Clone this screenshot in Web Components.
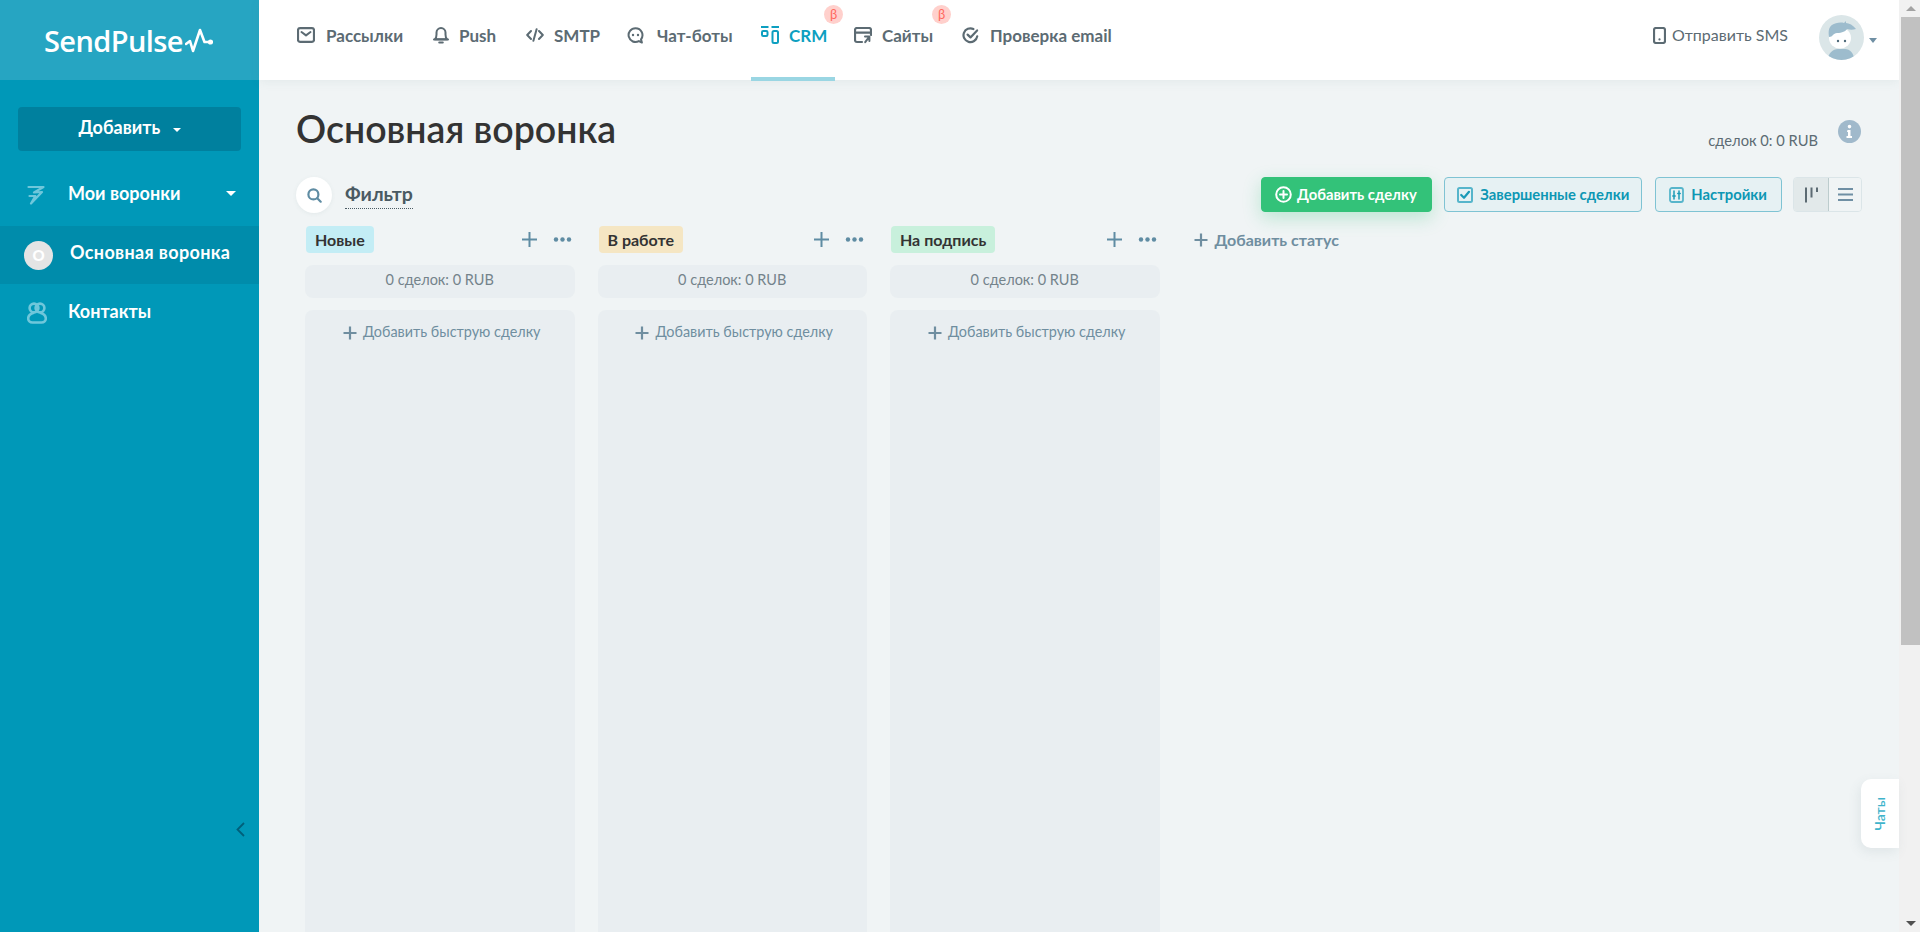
<!DOCTYPE html>
<html lang="ru"><head><meta charset="utf-8"><title>SendPulse CRM</title>
<style>
html,body{margin:0;height:932px;overflow:hidden;background:#f0f4f5;font-family:"Lato","Open Sans","Noto Sans",sans-serif;color:#333}
</style></head><body>
<sp-app>
  <sp-sidebar slot="side"></sp-sidebar>
  <sp-topnav slot="top"></sp-topnav>
  <sp-board slot="main"></sp-board>
  <sp-scrollbar slot="bar"></sp-scrollbar>
  <sp-chat-tab slot="float">Чаты</sp-chat-tab>
</sp-app>
<script>
const FONT='"Lato","Open Sans","Noto Sans",sans-serif';
const svg=(w,h,vb,body,extra='')=>`<svg xmlns="http://www.w3.org/2000/svg" width="${w}" height="${h}" viewBox="${vb}" fill="none" stroke-linecap="round" stroke-linejoin="round" ${extra}>${body}</svg>`;
const ICONS={
 mail:svg(18,16,'0 0 18 16','<rect x="1" y="1.2" width="16" height="13.6" rx="2" stroke="currentColor" stroke-width="2.200"/><path d="M4.500 5l4.500 3.400L13.500 5" stroke="currentColor" stroke-width="2"/>'),
 bell:svg(16,18,'0 0 16 18','<path d="M2 13.200c1.200-1.200 1.500-2.400 1.500-4.600V6.600a4.500 4.500 0 0 1 9 0v2c0 2.200.3 3.400 1.500 4.600z" stroke="currentColor" stroke-width="2"/><path d="M1 13.400h14M6.200 16.600h3.600" stroke="currentColor" stroke-width="2"/>'),
 code:svg(18,14,'0 0 18 14','<path d="M5 3L1.200 7 5 11M13 3l3.800 4L13 11M10.600 1.200L7.400 12.800" stroke="currentColor" stroke-width="2"/>'),
 chat:svg(17,17,'0 0 17 17','<path d="M8.500 1.200a6.900 6.900 0 1 0 3.400 12.900l3 1.400-.9-3.200A6.900 6.900 0 0 0 8.500 1.200z" stroke="currentColor" stroke-width="2"/><circle cx="6" cy="8" r="1.200" fill="currentColor"/><circle cx="11" cy="8" r="1.200" fill="currentColor"/>'),
 crm:svg(18,18,'0 0 18 18','<path d="M0 1h7.500M10.500 1H18" stroke="currentColor" stroke-width="2" stroke-linecap="butt"/><rect x="1" y="5" width="5.500" height="5" rx="1.200" stroke="currentColor" stroke-width="2"/><rect x="11.500" y="5" width="5.500" height="12" rx="1.500" stroke="currentColor" stroke-width="2"/>'),
 site:svg(18,17,'0 0 18 17','<path d="M8 15H3a2 2 0 0 1-2-2V3a2 2 0 0 1 2-2h12a2 2 0 0 1 2 2v5" stroke="currentColor" stroke-width="2.200"/><path d="M1 5.600h16" stroke="currentColor" stroke-width="2.200"/><path d="M11 9.500h4.400v4.400M15.200 9.800l-4 5.400" stroke="currentColor" stroke-width="2"/>'),
 check:svg(18,17,'0 0 18 17','<path d="M15.200 9.400A6.900 6.900 0 1 1 11.400 2" stroke="currentColor" stroke-width="2.200"/><path d="M5.600 7.600l2.900 2.800 6.600-7" stroke="currentColor" stroke-width="2.200"/>'),
 phone:svg(13,17,'0 0 13 17','<rect x="1" y="1" width="11" height="15" rx="2" stroke="currentColor" stroke-width="2.200"/><circle cx="6.500" cy="12.400" r="1.100" fill="currentColor"/>'),
 funnel:svg(18,20,'0 0 18 20','<path d="M1.500 2h15L7 7.500l8-.5L4 18.500l4.300-7.500H2.500" stroke="currentColor" stroke-width="2.200"/>'),
 people:svg(20,22,'0 0 20 22','<circle cx="7" cy="6" r="4.400" stroke="currentColor" stroke-width="2.600"/><circle cx="13" cy="6" r="4.400" stroke="currentColor" stroke-width="2.600"/><path d="M6 11c-3 1-4.800 3-4.800 5.500 0 2.200 1.700 4 4.300 4h9c2.600 0 4.300-1.800 4.300-4 0-2.500-1.800-4.500-4.800-5.500" stroke="currentColor" stroke-width="2.600"/>'),
 search:svg(15,15,'0 0 15 15','<circle cx="6.400" cy="6.400" r="5" stroke="currentColor" stroke-width="2.200"/><path d="M10.300 10.300l3.400 3.400" stroke="currentColor" stroke-width="2.200"/>'),
 plus:svg(17,17,'0 0 17 17','<path d="M8.500 1v15M1 8.500h15" stroke="currentColor" stroke-width="2" stroke-linecap="butt"/>'),
 plusSm:svg(14,14,'0 0 14 14','<path d="M7 .5v13M.5 7h13" stroke="currentColor" stroke-width="2.200" stroke-linecap="butt"/>'),
 dots:svg(19,5,'0 0 19 5','<circle cx="3" cy="2.500" r="2.200" fill="currentColor"/><circle cx="9.500" cy="2.500" r="2.200" fill="currentColor"/><circle cx="16" cy="2.500" r="2.200" fill="currentColor"/>'),
 pluscircle:svg(17,17,'0 0 17 17','<circle cx="8.500" cy="8.500" r="7.300" stroke="currentColor" stroke-width="2"/><path d="M8.500 5v7M5 8.500h7" stroke="currentColor" stroke-width="2"/>'),
 checkbox:svg(16,16,'0 0 16 16','<rect x="1" y="1" width="14" height="14" rx="1.500" stroke="#56b5cb" stroke-width="2"/><path d="M4.200 8l2.800 2.800 5-6" stroke="#1b9ab7" stroke-width="2.200"/>'),
 sliders:svg(15,16,'0 0 15 16','<rect x="1" y="1" width="13" height="14" rx="2" stroke="#56b5cb" stroke-width="1.800"/><path d="M5 4v8M10 4v8" stroke="#1b9ab7" stroke-width="1.500"/><path d="M3.800 9h2.400M8.800 6.500h2.400" stroke="#1b9ab7" stroke-width="1.500"/>'),
 kanban:svg(15,17,'0 0 15 17','<path d="M2 1.500v15" stroke="#5c6b73" stroke-width="2" stroke-linecap="butt"/><path d="M7.500 1.500v10" stroke="#5c6b73" stroke-width="2" stroke-linecap="butt"/><path d="M13 1.500v4.500" stroke="#5c6b73" stroke-width="2" stroke-linecap="butt"/>'),
 list:svg(15,15,'0 0 15 15','<path d="M0 2h15M0 7.500h15M0 13h15" stroke="#6f8fa4" stroke-width="2" stroke-linecap="butt"/>')
};
function def(name,html,init){
  customElements.define(name,class extends HTMLElement{
    constructor(){super();const r=this.attachShadow({mode:'open'});r.innerHTML=typeof html==='function'?html(this):html;}
    connectedCallback(){if(init&&!this._i){this._i=1;init(this,this.shadowRoot);}}
  });
}
def('sp-app',`<style>
:host{display:grid;grid-template-columns:259px 1fr 21px;grid-template-rows:80px 1fr;width:1920px;height:932px;position:relative;overflow:hidden;background:#f0f4f5}
::slotted([slot=side]){grid-row:1/3}
::slotted([slot=bar]){grid-column:3;grid-row:1/3}
</style><slot name="side"></slot><slot name="top"></slot><slot name="main"></slot><slot name="bar"></slot><slot name="float"></slot>`);

def('sp-logo',`<style>
:host{display:flex;align-items:center;height:80px;background:#26a5c2;padding-left:44px;box-sizing:border-box;color:#fff}
span{font:600 29px/1 "Open Sans","Lato",sans-serif;letter-spacing:-.6px}
svg{display:block;margin:3px 0 0 2px}
</style><span>SendPulse</span><svg width="28" height="28" viewBox="0 0 28 28" fill="none" stroke="#fff" stroke-width="2.600" stroke-linejoin="round" stroke-linecap="round"><path d="M1 16l4-3 3 10L15 2l4.500 12H25"/><circle cx="25.500" cy="14" r="2.600" fill="#fff" stroke="none"/></svg>`);

def('sp-side-item',el=>`<style>
:host{display:flex;align-items:center;height:var(--h,58px);color:#fff;font:700 18px/1 ${FONT};padding-left:27px;box-sizing:border-box;position:relative}
:host([active]){background:#008cab;padding-left:24px}
:host([active]) .t{margin-bottom:7px;letter-spacing:.35px}
.i{display:flex;width:41px;color:#6fc7db;flex:none}
.dot{width:29px;height:29px;border-radius:50%;background:#e4e4e4;color:#fff;font:900 15px/29px ${FONT};text-align:center;margin-right:17px;flex:none}
.t{margin-bottom:5px}
.c{position:absolute;left:226px;top:50%;margin-top:-4px;border:5px solid transparent;border-top:5px solid #fff;border-bottom:0}
</style>${el.hasAttribute('active')?'<span class="dot">О</span>':`<span class="i">${ICONS[el.getAttribute('icon')]}</span>`}<span class="t"><slot></slot></span>${el.hasAttribute('caret')?'<i class="c"></i>':''}`);

def('sp-sidebar',`<style>
:host{display:flex;flex-direction:column;background:#0098b8;height:932px;position:relative}
.add{margin:27px 18px 13px;height:44px;background:#00809e;border-radius:4px;color:#fff;font:700 18px/41px ${FONT};text-align:center}
.add i{display:inline-block;border:4.500px solid transparent;border-top:4.500px solid #fff;border-bottom:0;margin-left:8px;vertical-align:2px}
.chev{position:absolute;left:236px;top:822px;color:#005f7a}
</style><sp-logo></sp-logo>
<div class="add">Добавить <i></i></div>
<sp-side-item icon="funnel" caret style="--h:62px">Мои воронки</sp-side-item>
<sp-side-item active>Основная воронка</sp-side-item>
<sp-side-item icon="people">Контакты</sp-side-item>
<svg class="chev" width="9" height="15" viewBox="0 0 9 15" fill="none" stroke="currentColor" stroke-width="1.800"><path d="M8 1L1.500 7.500 8 14"/></svg>`);

def('sp-nav-item',el=>`<style>
:host{display:flex;align-items:center;gap:var(--g,11px);height:80px;padding:0 10px 10px;box-sizing:border-box;position:relative;color:#5c6b73;font:700 17px/1 ${FONT};width:var(--w);white-space:nowrap}
:host([active]){color:#0d9fc0}
:host([active])::after{content:"";position:absolute;left:0;right:0;bottom:-1px;height:4px;background:#9ad6e3}
.i{display:flex;flex:none}
.b{position:absolute;right:-8px;top:5px;width:19px;height:19px;border-radius:50%;background:#ffd0cc;color:#ff6a5e;font:400 13px/18px ${FONT};text-align:center}
</style><span class="i">${ICONS[el.getAttribute('icon')]}</span><slot></slot>${el.hasAttribute('beta')?'<span class="b">β</span>':''}`);

def('sp-topnav',`<style>
:host{display:flex;align-items:flex-start;height:80px;background:#fff;padding-left:28px;box-sizing:border-box;box-shadow:0 2px 10px rgba(80,110,120,.08);position:relative;z-index:2}
.sms{margin-left:auto;display:flex;align-items:center;gap:6px;height:70px;color:#5c6b73;font:400 16px/1 ${FONT}}
.sms span{display:flex}
.ava{margin:15px 0 0 31px;width:45px;height:45px;display:block}
.car{margin:38px 22px 0 5px;border:4.500px solid transparent;border-top:5px solid #6f8fa4;border-bottom:0;height:0;width:0}
</style>
<sp-nav-item icon="mail" style="--w:126px">Рассылки</sp-nav-item>
<sp-nav-item icon="bell" style="--w:85px;margin-left:10px;--g:10px">Push</sp-nav-item>
<sp-nav-item icon="code" style="--w:95px;margin-left:8px;--g:10px">SMTP</sp-nav-item>
<sp-nav-item icon="chat" style="--w:125px;margin-left:6px;--g:13px">Чат-боты</sp-nav-item>
<sp-nav-item icon="crm" active beta style="--w:84px;margin-left:9px;--g:10px">CRM</sp-nav-item>
<sp-nav-item icon="site" beta style="--w:99px;margin-left:9px;--g:10px">Сайты</sp-nav-item>
<sp-nav-item icon="check" style="--w:172px;margin-left:9px;--g:10px">Проверка email</sp-nav-item>
<div class="sms"><span>${ICONS.phone}</span>Отправить SMS</div>
<svg class="ava" viewBox="0 0 45 45"><defs><clipPath id="c"><circle cx="22.500" cy="22.500" r="22.500"/></clipPath></defs><g clip-path="url(#c)"><rect width="45" height="45" fill="#dbe6e8"/><path d="M9 45c0-7 5-11 10-11h7c5 0 9 4 9 11z" fill="#9dbccd"/><ellipse cx="21" cy="23" rx="11" ry="10.500" fill="#fff"/><path d="M10 22c-1-6 0-10 3-12 3-2 8-3 12-2l2-2v2c3 0 7 2 10 6-3 1-6 1-9 0-1 2-5 4-10 4-2 0-3 1-4 2-1 1-2 2-4 2z" fill="#9dbccd"/><circle cx="19" cy="26" r="1.200" fill="#4f6a7a"/><circle cx="26" cy="26" r="1.200" fill="#4f6a7a"/></g></svg><i class="car"></i>`);

def('sp-btn',el=>`<style>
:host{display:flex;align-items:center;height:35px;box-sizing:border-box;border-radius:4px;font:700 14.800px/1 ${FONT};gap:7px;padding:0 var(--pr,13px) 0 var(--pl,13px);border:1px solid #7fc3d3;background:#e6f1f3;color:#0d97b4;flex:none;white-space:nowrap}
:host([primary]){background:#33c279;border-color:#33c279;color:#fff;box-shadow:0 6px 18px rgba(51,194,121,.28);gap:5px}
span{display:flex}
</style><span>${ICONS[el.getAttribute('icon')]}</span><slot></slot>`);

def('sp-view-toggle',`<style>
:host{display:flex;width:69px;height:35px;border:1px solid #dbe5e8;border-radius:4px;box-sizing:border-box;overflow:hidden;flex:none;margin-left:-1px}
div{display:flex;align-items:center;justify-content:center}
.a{width:34px;background:#e2e9ea;border-right:1px solid #bccccd}
.b{flex:1;background:#f0f4f5}
</style><div class="a">${ICONS.kanban}</div><div class="b">${ICONS.list}</div>`);

def('sp-column',el=>`<style>
:host{display:flex;flex-direction:column;width:269.500px;flex:none;height:100%}
.h{display:flex;align-items:center;height:27px;padding:0 3px 0 1px;color:#5f8ca3;margin-bottom:12px}
.p{background:var(--c);border-radius:4px;height:27px;padding:0 9px;font:700 16px/27px ${FONT};color:#333}
.pl{margin-left:auto;display:flex}.d{margin-left:15px;display:flex}
.s{height:33px;background:#e9eef1;border-radius:8px;text-align:center;font:400 14.500px/30px ${FONT};color:#74838b;margin-bottom:12px}
.l{flex:1;background:#e9eef1;border-radius:8px 8px 0 0;color:#6f8ea0;font:400 14.400px/1 ${FONT};display:flex;justify-content:center;align-items:flex-start;gap:6px;padding:15px 0 0 4px;box-sizing:border-box}
.l span{display:flex;margin-top:1px}
</style><div class="h"><div class="p"><slot></slot></div><span class="pl">${ICONS.plus}</span><span class="d">${ICONS.dots}</span></div>
<div class="s">0 сделок: 0 RUB</div><div class="l"><span>${ICONS.plusSm}</span>Добавить быструю сделку</div>`);

def('sp-board',`<style>
:host{display:flex;flex-direction:column;padding:0 37px 0 37px;box-sizing:border-box;min-width:0;height:852px;overflow:hidden}
.t{display:flex;height:97px;flex:none}
h1{margin:29px 0 0;font:600 37.500px/40px ${FONT};color:#333;letter-spacing:0}
.sum{margin:52px 0 0 auto;font:400 14.700px/16px ${FONT};color:#5c6b73}
.info{margin:40px 1px 0 20px;display:block}
.b{display:flex;align-items:flex-start;height:37px;flex:none;margin-bottom:12px}
.sr{width:36px;height:36px;background:#fff;border-radius:50%;display:flex;align-items:center;justify-content:center;color:#5f8ca3;box-shadow:0 1px 4px rgba(80,110,120,.08)}
.f{margin:5px 0 0 13px;font:700 19.500px/24px ${FONT};color:#4a5a63;border-bottom:1px dotted #4a5a63;height:26px;white-space:nowrap}
.acts{margin-left:auto;display:flex;gap:12px}
.cols{display:flex;gap:23px;flex:1;margin-left:9px;min-height:0}
.ad{display:flex;align-items:center;gap:7px;height:27px;margin-left:11px;color:#6f8ea0;font:700 16px/1 ${FONT};flex:none}
.ad span{display:flex}
</style><div class="t"><h1>Основная воронка</h1><div class="sum">сделок 0: 0 RUB</div>
<svg class="info" width="23" height="23" viewBox="0 0 23 23"><circle cx="11.500" cy="11.500" r="11.500" fill="#a0b9cb"/><path d="M9.500 10h3v6h1.500v2H8.500v-2H10v-4H9zM11.500 4.800a1.800 1.800 0 1 1 0 3.600 1.800 1.800 0 0 1 0-3.600z" fill="#fff"/></svg></div>
<div class="b"><div class="sr">${ICONS.search}</div><div class="f">Фильтр</div><div class="acts">
<sp-btn icon="pluscircle" primary style="--pl:13px;--pr:14px">Добавить сделку</sp-btn><sp-btn icon="checkbox" style="--pl:12.500px;--pr:12px;margin-right:.5px">Завершенные сделки</sp-btn><sp-btn icon="sliders" style="--pl:13.500px;--pr:14px">Настройки</sp-btn><sp-view-toggle></sp-view-toggle></div></div>
<div class="cols"><sp-column style="--c:#c3edf5">Новые</sp-column><sp-column style="--c:#f5e6c3">В работе</sp-column><sp-column style="--c:#c8f0dc">На подпись</sp-column>
<div class="ad"><span>${ICONS.plusSm}</span>Добавить статус</div></div>`);

def('sp-scrollbar',`<style>
:host{display:flex;flex-direction:column;align-items:stretch;background:#f1f1f1;height:932px;padding-left:2px;box-sizing:border-box;position:relative;z-index:3}
.u,.d{height:17px;display:flex;align-items:center;justify-content:center;flex:none}
.u i{border:5px solid transparent;border-bottom:5px solid #a3a3a3;border-top:0}
.d i{border:5px solid transparent;border-top:5px solid #505050;border-bottom:0}
.t{height:628px;background:#c1c1c1;flex:none}.s{flex:1}
</style><div class="u"><i></i></div><div class="t"></div><div class="s"></div><div class="d"><i></i></div>`);

def('sp-chat-tab',`<style>
:host{position:absolute;left:1861px;top:779px;width:38px;height:69px;background:#fff;border-radius:10px 0 0 10px;box-shadow:-2px 4px 12px rgba(80,110,120,.1);display:flex;align-items:center;justify-content:center;color:#3fb4cb;font:600 14px/1 ${FONT};z-index:3}
span{writing-mode:vertical-rl;transform:rotate(180deg)}
</style><span><slot></slot></span>`);
</script></body></html>
